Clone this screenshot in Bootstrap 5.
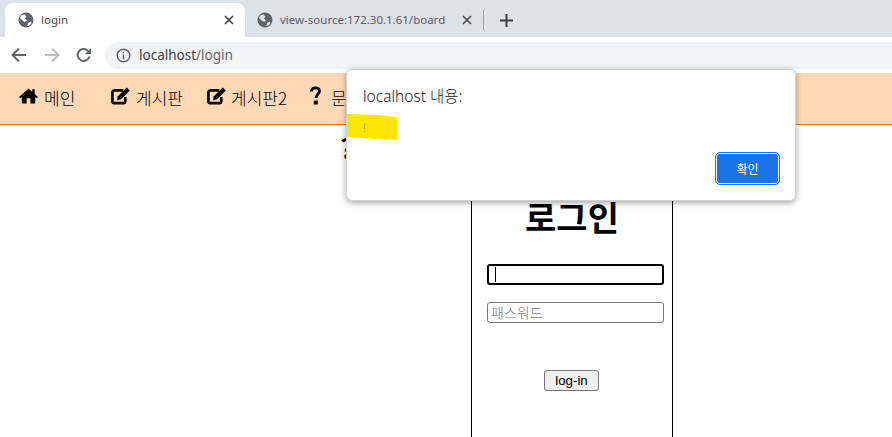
<!DOCTYPE html>
<html lang="ko">
<head>
<meta charset="utf-8">
<title>login</title>
<link href="https://cdn.jsdelivr.net/npm/bootstrap@5.3.0/dist/css/bootstrap.min.css" rel="stylesheet">
<style>
html,body{height:100%;overflow:hidden;background:#fff}
body{font-family:"Noto Sans","Noto Sans CJK KR",sans-serif;color:#000;position:relative}
svg{flex-shrink:0}
.strip{height:37px;background:#dee1e6;padding-left:5px}
.tabx{height:34px;margin-top:3px;font-size:11.5px;white-space:nowrap}
.tabx.on{width:240px;padding-left:13px;background:#fff;border-radius:8px 8px 0 0;color:#45474a}
.tabx.off{width:239px;padding-left:12px;color:#5a5e63}
.tabt{margin-left:7px;flex:1}
.closex{margin-right:11px}
.sep{width:1px;height:20px;background:#9aa0a6;flex-shrink:0}
.plusx{margin:3px 0 0 16px}
.tools{height:36px;background:#fff;padding-left:4px}
.nb{justify-content:center;flex-shrink:0}
.nb1{width:29px}
.nb2{width:37px}
.nb3{width:27px}
.addr{height:27px;background:#f1f3f4;border-radius:14px 0 0 14px;flex:1;margin-left:8px;padding-left:11px;font-size:13.5px;color:#3c4043}
.addr span{color:#5f6368}
.menuband{height:52px;background:#ffd8b5;border-bottom:1px solid #e8711e;padding-left:19px;font-size:17px;font-weight:300;font-family:"Noto Sans CJK KR",sans-serif}
.mitem{white-space:nowrap;line-height:20px}
.mitem svg{margin-bottom:6px}
.mitem span{margin-left:6px;margin-bottom:2px}
.m1{width:92px}
.m2{width:96px}
.m3{width:103px}
.m3 span{margin-left:5px}
.mitem .mq{margin-left:10px}
.holder{height:313px;position:relative}
.huh{font-size:28px;font-weight:700;line-height:34px;padding:5px 0 0 340px;height:39px;font-family:"Noto Sans CJK KR",sans-serif}
.loginbox{width:202px;height:274px;margin-left:471px;border:solid #000;border-width:1px;border-bottom:0;padding:0 7px 0 15px;display:flex;flex-direction:column}
.ttl{font-family:"Noto Sans CJK KR",sans-serif;font-size:34px;font-weight:700;text-align:center;line-height:40px;margin:32px -7px 27px -15px}
.fld{width:177px;height:21px;border:1px solid #767676;border-radius:3px;background:#fff;font-size:14px;padding:0 3px;color:#000;font-weight:300;font-family:"Noto Sans CJK KR",sans-serif;outline:0;display:block}
.fld::placeholder{color:#757575;opacity:1}
.fld.foc{border:2px solid #000;margin-bottom:17px}
.caret{width:1px;height:15px;background:#000;margin:1px 0 0 3px}
.gobtn{width:55px;height:21px;margin:47px 0 0 57px;border:1px solid #767676;border-radius:3px;background:#efefef;font-size:13.3px;padding:0;line-height:18px;font-family:"Liberation Sans",sans-serif;color:#000}
.dlg{position:absolute;left:346px;top:69px;width:450px;height:132px;background:#fff;border-radius:6px;border:1px solid #d0d1d3;box-shadow:0 2px 6px rgba(0,0,0,.35);padding:16px 15px 15px 16px;font-size:15.500px;font-weight:300;color:#202124;font-family:"Noto Sans","Noto Sans CJK KR",sans-serif}
.dlgh{line-height:20px}
.dlgm{font-size:12px;color:#9aa000;line-height:16px;margin-top:14px;position:relative}
.okb{position:absolute;right:15px;bottom:15px;width:65px;height:33px;background:#1a73e8;color:#fff;border:1px solid #1a73e8;box-shadow:inset 0 0 0 1px #fff;border-radius:5px;font-size:12px;padding:0;font-family:"Noto Sans CJK KR",sans-serif}
.hl{position:absolute;left:0;top:44px;width:50px;height:26px}
</style>
</head>
<body>
<div class="strip d-flex align-items-center">
  <div class="tabx on d-flex align-items-center">
    <svg width="16" height="16" viewBox="0 0 16 16"><circle cx="8" cy="8" r="7.500" fill="#5f6368"/><path d="M3 3.500 6.500 2.500 8.500 4.500 7 6.500 9 8.500 7 10 4.500 8.500 2 6ZM10 11l3-1.500 .5 1.500-2.500 3-1.500-.5Z" fill="#fff"/></svg>
    <span class="tabt">login</span>
    <svg class="closex" width="10" height="10" viewBox="0 0 10 10"><path d="M1 1 9 9M9 1 1 9" stroke="#3c4043" stroke-width="1.600"/></svg>
  </div>
  <div class="tabx off d-flex align-items-center">
    <svg width="16" height="16" viewBox="0 0 16 16"><circle cx="8" cy="8" r="7.500" fill="#5f6368"/><path d="M3 3.500 6.500 2.500 8.500 4.500 7 6.500 9 8.500 7 10 4.500 8.500 2 6ZM10 11l3-1.500 .5 1.500-2.500 3-1.500-.5Z" fill="#dee1e6"/></svg>
    <span class="tabt">view-source:172.30.1.61/board</span>
    <svg class="closex" width="10" height="10" viewBox="0 0 10 10"><path d="M1 1 9 9M9 1 1 9" stroke="#45484c" stroke-width="1.600"/></svg>
    <div class="sep"></div>
  </div>
  <svg class="plusx" width="13" height="13" viewBox="0 0 13 13"><path d="M6.500 0V13M0 6.500H13" stroke="#3c4043" stroke-width="2"/></svg>
</div>
<div class="tools d-flex align-items-center">
  <div class="nb nb1 d-flex"><svg width="16" height="16" viewBox="0 0 16 16"><path d="M15 8H2M8 1.500 1.500 8 8 14.500" fill="none" stroke="#5f6368" stroke-width="2"/></svg></div>
  <div class="nb nb2 d-flex"><svg width="16" height="16" viewBox="0 0 16 16"><path d="M1 8H14M8 1.500 14.500 8 8 14.500" fill="none" stroke="#babcbe" stroke-width="2"/></svg></div>
  <div class="nb nb3 d-flex"><svg width="16" height="16" viewBox="0 0 16 16"><path d="M13.500 9.500A6 6 0 1 1 12 3.700" fill="none" stroke="#5f6368" stroke-width="2"/><path d="M15 1V7H9Z" fill="#5f6368"/></svg></div>
  <div class="addr d-flex align-items-center">
    <svg width="15" height="15" viewBox="0 0 15 15" class="me-2"><circle cx="7.500" cy="7.500" r="6.300" fill="none" stroke="#5f6368" stroke-width="1.500"/><path d="M7.500 6.500V11M7.500 4V5.300" stroke="#5f6368" stroke-width="1.500"/></svg>
    localhost<span>/login</span>
  </div>
</div>
<div class="menuband d-flex align-items-center">
  <div class="mitem m1 d-flex align-items-center"><svg width="19" height="17" viewBox="0 0 20 17"><path d="M10 1 0 10l1.500 1.500L3 10.200V17H8V11.500H12V17H17V10.200l1.500 1.300L20 10 16.500 7V2H14V4.700Z" fill="#000"/></svg><span>메인</span></div>
  <div class="mitem m2 d-flex align-items-center"><svg width="19" height="18" viewBox="0 0 20 18"><path d="M13 3H3.500A2 2 0 0 0 1.500 5V14.500A2 2 0 0 0 3.500 16.500H13A2 2 0 0 0 15 14.500V10" fill="none" stroke="#000" stroke-width="2.800"/><path d="M16.500 0 20 3.300 10.500 12.500 6.500 13.500 7 9.500Z" fill="#000"/></svg><span>게시판</span></div>
  <div class="mitem m3 d-flex align-items-center"><svg width="19" height="18" viewBox="0 0 20 18"><path d="M13 3H3.500A2 2 0 0 0 1.500 5V14.500A2 2 0 0 0 3.500 16.500H13A2 2 0 0 0 15 14.500V10" fill="none" stroke="#000" stroke-width="2.800"/><path d="M16.500 0 20 3.300 10.500 12.500 6.500 13.500 7 9.500Z" fill="#000"/></svg><span>게시판2</span></div>
  <div class="mitem d-flex align-items-center"><svg width="11" height="20" viewBox="0 0 11 20"><path d="M1.500 5.500C1.500 3 3.200 1.800 5.500 1.800 8 1.800 9.500 3.300 9.500 5.200 9.500 8 6 8 6 12" fill="none" stroke="#000" stroke-width="2.800"/><rect x="3.800" y="14.500" width="4" height="4" fill="#000"/></svg><span class="mq">문의</span></div>
</div>
<div class="holder">
  <div class="huh">?</div>
  <div class="loginbox">
    <div class="ttl">로그인</div>
    <div class="fld foc"><div class="caret"></div></div>
    <input class="fld" type="text" placeholder="패스워드">
    <button class="gobtn" type="button">log-in</button>
  </div>
</div>
<div class="dlg">
  <div class="dlgh">localhost 내용:</div>
  <svg class="hl" viewBox="0 0 50 26"><path d="M0 0 30 1 50 3V26L30 25 0 23Z" fill="#ffe600"/></svg>
  <div class="dlgm">!</div>
  <button class="okb" type="button">확인</button>
</div>
<script src="https://cdn.jsdelivr.net/npm/bootstrap@5.3.0/dist/js/bootstrap.bundle.min.js"></script>
</body>
</html>
